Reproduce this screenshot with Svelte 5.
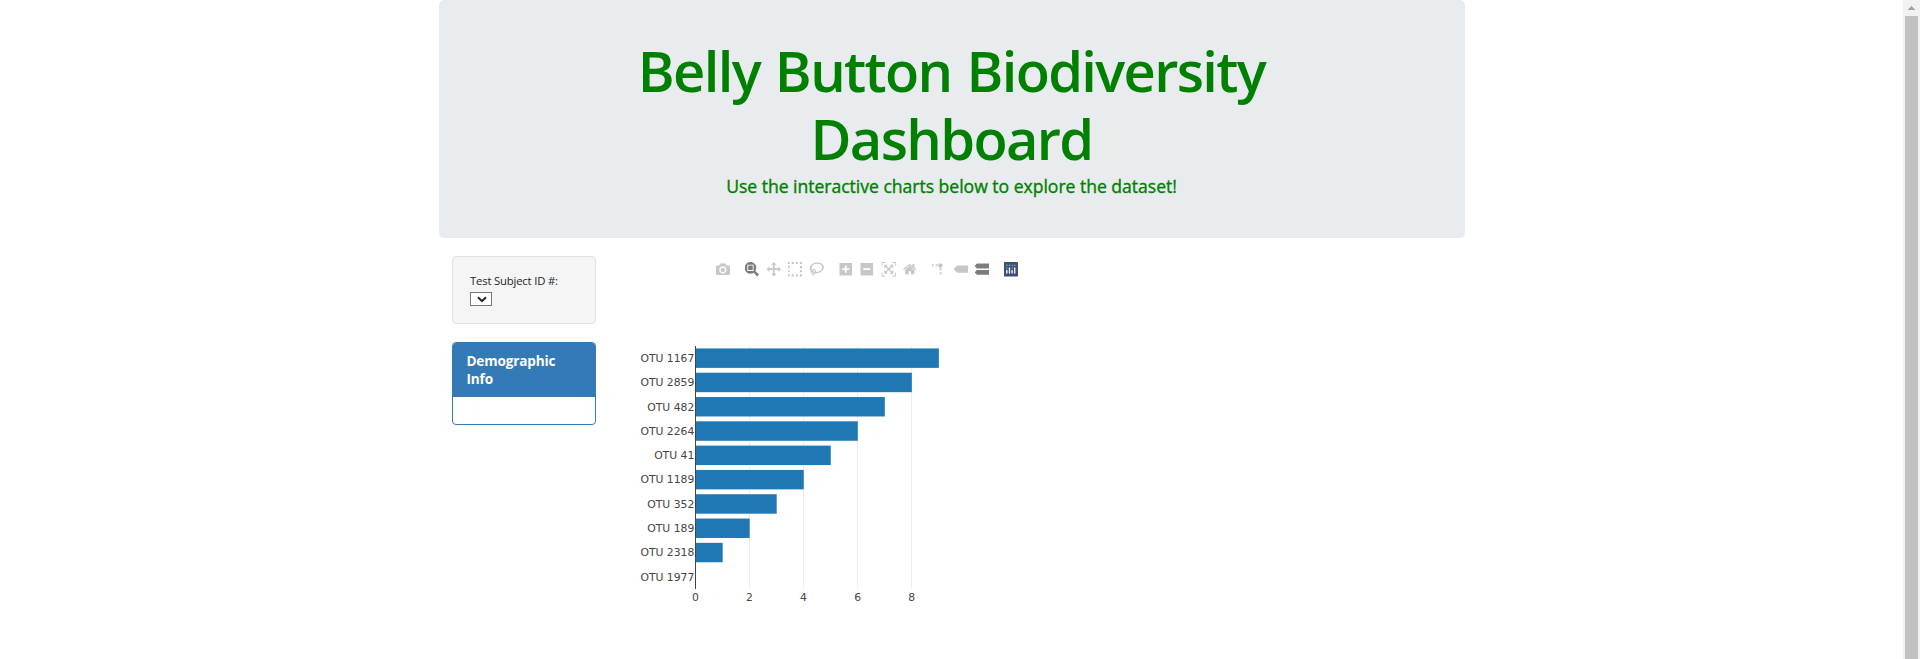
<script>
  const bars = [
    ['OTU 1167', 9],
    ['OTU 2859', 8],
    ['OTU 482', 7],
    ['OTU 2264', 6],
    ['OTU 41', 5],
    ['OTU 1189', 4],
    ['OTU 352', 3],
    ['OTU 189', 2],
    ['OTU 2318', 1],
    ['OTU 1977', 0]
  ];
  const ticks = [0, 2, 4, 6, 8];
  const x0 = 72.6;
  const unit = 27.03;
  const top = 10;
  const pitch = 24.3;
  const thick = 19.44;
  const flip = 'matrix(1 0 0 -1 0 850)';

  const groups = [
    [
      { name: 'camera', w: 1000, d: 'm500 450c-83 0-150-67-150-150 0-83 67-150 150-150 83 0 150 67 150 150 0 83-67 150-150 150z m400 150h-120c-16 0-34 13-39 29l-31 93c-6 15-23 28-40 28h-340c-16 0-34-13-39-28l-31-94c-6-15-23-28-40-28h-120c-55 0-100-45-100-100v-450c0-55 45-100 100-100h800c55 0 100 45 100 100v450c0 55-45 100-100 100z m-400-550c-138 0-250 112-250 250 0 138 112 250 250 250 138 0 250-112 250-250 0-138-112-250-250-250z m365 380c-19 0-35 16-35 35 0 19 16 35 35 35 19 0 35-16 35-35 0-19-16-35-35-35z' }
    ],
    [
      { name: 'zoom', on: true, w: 1000, d: 'm1000-25l-250 251c40 63 63 138 63 218 0 224-182 406-407 406-224 0-406-182-406-406s183-406 407-406c80 0 155 22 218 62l250-250 125 125z m-812 250l0 438 437 0 0-438-437 0z m62 375l313 0 0-312-313 0 0 312z' },
      { name: 'pan', w: 1000, d: 'm1000 350l-187 188 0-125-250 0 0 250 125 0-188 187-187-187 125 0 0-250-250 0 0 125-188-188 186-187 0 125 252 0 0-250-125 0 187-188 188 188-125 0 0 250 250 0 0-126 187 188z' },
      { name: 'select', w: 1000, d: 'm0 850l0-143 143 0 0 143-143 0z m286 0l0-143 143 0 0 143-143 0z m285 0l0-143 143 0 0 143-143 0z m286 0l0-143 143 0 0 143-143 0z m-857-286l0-143 143 0 0 143-143 0z m857 0l0-143 143 0 0 143-143 0z m-857-285l0-143 143 0 0 143-143 0z m857 0l0-143 143 0 0 143-143 0z m-857-286l0-143 143 0 0 143-143 0z m286 0l0-143 143 0 0 143-143 0z m285 0l0-143 143 0 0 143-143 0z m286 0l0-143 143 0 0 143-143 0z' },
      { name: 'lasso', w: 1031, d: 'm1018 538c-36 207-290 336-568 286-277-48-473-256-436-463 10-57 36-108 76-151-13-66 11-137 68-183 34-28 75-41 114-42l-55-70 0 0c-2-1-3-2-4-3-10-14-8-34 5-45 14-11 34-8 45 4 1 1 2 3 2 5l0 0 113 140c16 11 31 24 45 40 4 3 6 7 8 11 48-3 100 0 151 9 278 48 473 255 436 462z m-624-379c-80 14-149 48-197 96 42 42 109 47 156 9 33-26 47-66 41-105z m-187-74c-19 16-33 37-39 60 50-32 109-55 174-68-42-25-95-24-135 8z m360 75c-34-7-69-9-102-8 8 62-16 128-68 170-73 59-175 54-244-5-9 20-16 40-20 61-28 159 121 317 333 354s407-60 434-217c28-159-121-318-333-355z' }
    ],
    [
      { name: 'zoom in', w: 875, d: 'm1 787l0-875 875 0 0 875-875 0z m687-500l-187 0 0-187-125 0 0 187-188 0 0 125 188 0 0 187 125 0 0-187 187 0 0-125z' },
      { name: 'zoom out', w: 875, d: 'm0 788l0-876 875 0 0 876-875 0z m688-500l-500 0 0 125 500 0 0-125z' },
      { name: 'autoscale', w: 1000, d: 'm250 850l-187 0-63 0 0-62 0-188 63 0 0 188 187 0 0 62z m688 0l-188 0 0-62 188 0 0-188 62 0 0 188 0 62-62 0z m-875-938l0 188-63 0 0-188 0-62 63 0 187 0 0 62-187 0z m875 188l0-188-188 0 0-62 188 0 62 0 0 62 0 188-62 0z m-125 188l-1 0-93-94-156 156 156 156 92-93 2 0 0 250-250 0 0-2 93-92-156-156-156 156 94 92 0 2-250 0 0-250 0 0 93 93 157-156-157-156-93 94 0 0 0-250 250 0 0 0-94 93 156 157 156-157-93-93 0 0 250 0 0 250z' },
      { name: 'home', w: 928.6, d: 'm786 296v-267q0-15-11-26t-25-10h-214v214h-143v-214h-214q-15 0-25 10t-11 26v267q0 1 0 2t0 2l321 264 321-264q1-1 1-4z m124 39l-34-41q-5-5-12-6h-2q-7 0-12 3l-386 322-386-322q-7-4-13-4-7 2-12 7l-35 41q-4 5-3 13t6 12l401 334q18 15 42 15t43-15l136-114v109q0 8 5 13t13 5h107q8 0 13-5t5-13v-227l122-102q5-5 6-12t-4-13z' }
    ],
    [
      { name: 'spikes', w: 1000, t: 'matrix(1.5 0 0 -1.5 0 850)', d: 'M512 409c0-57-46-104-103-104-57 0-104 47-104 104 0 57 47 103 104 103 57 0 103-46 103-103z m-327-39l92 0 0 92-92 0z m-185 0l92 0 0 92-92 0z m370-186l92 0 0 93-92 0z m0-184l92 0 0 92-92 0z' },
      { name: 'closest', w: 1500, d: 'm375 725l0 0-375-375 375-374 0-1 1125 0 0 750-1125 0z' },
      { name: 'compare', on: true, w: 1125, d: 'm187 786l0 2-187-188 188-187 0 0 937 0 0 373-938 0z m0-499l0 1-187-188 188-188 0 0 937 0 0 376-938-1z' }
    ]
  ];
  const dots = [[78, 54], [102, 30], [78, 30], [54, 30], [30, 30], [30, 54]];
</script>

<div class="page">
  <main class="container">
    <header>
      <h1>Belly Button Biodiversity<br />Dashboard</h1>
      <p>Use the interactive charts below to explore the dataset!</p>
    </header>
    <div class="row">
      <aside>
        <div class="well">
          <label for="subject">Test Subject ID #:</label>
          <button id="subject" class="picker" aria-label="Subject">
            <svg viewBox="0 0 10 7"><path d="M1 1.3 5 5.1 9 1.3" /></svg>
          </button>
        </div>
        <div class="panel">
          <h3>Demographic<br />Info</h3>
          <div class="body"></div>
        </div>
      </aside>
      <section>
        <div class="modebar">
          {#each groups as group}
            <div class="group">
              {#each group as icon}
                <svg class="icon" class:on={icon.on} viewBox="0 0 {icon.w} 1000">
                  <path d={icon.d} transform={icon.t ?? flip} />
                </svg>
              {/each}
            </div>
          {/each}
          <div class="group">
            <svg class="logo" viewBox="0 0 132 132">
              <rect width="132" height="132" rx="6" fill="#3f4f75" />
              {#each dots as [cx, cy]}
                <circle {cx} {cy} r="6" fill="#80cfbe" />
              {/each}
              <path fill="#fff" d="M30,72a6,6,0,0,0-6,6v24a6,6,0,0,0,12,0V78A6,6,0,0,0,30,72Z M78,72a6,6,0,0,0-6,6v24a6,6,0,0,0,12,0V78A6,6,0,0,0,78,72Z M54,48a6,6,0,0,0-6,6v48a6,6,0,0,0,12,0V54A6,6,0,0,0,54,48Z M102,48a6,6,0,0,0-6,6v48a6,6,0,0,0,12,0V54A6,6,0,0,0,102,48Z" />
            </svg>
          </div>
        </div>
        <svg class="chart" width="400" height="290">
          {#each ticks.slice(1) as t}
            <rect x={Math.floor(x0 + t * unit)} y={top} width="1" height="243" fill="#eee" />
          {/each}
          {#each bars as [label, value], i}
            <rect x={x0} y={top + i * pitch + (pitch - thick) / 2} width={value * unit} height={thick} fill="#1f77b4" />
            <text x="71.3" y={Math.round(top + (i + 0.5) * pitch + 3.8)} text-anchor="end">{label}</text>
          {/each}
          <rect x="72" y={top} width="1" height="243" fill="#444" />
          {#each ticks as t}
            <text x={x0 - 0.2 + t * unit} y="265" text-anchor="middle">{t}</text>
          {/each}
        </svg>
      </section>
    </div>
  </main>
  <div class="scrollbar">
    <svg width="17" height="16"><path d="M5 10h7v-1h-1v-1h-1v-1h-1v-1h-1v1h-1v1h-1v1h-1z" fill="#a3a3a3" /></svg>
    <div class="thumb"></div>
  </div>
</div>

<style>
  :global(body) {
    background: #fff;
    overflow: hidden;
  }
  .page {
    display: flex;
    height: 659px;
    overflow: hidden;
    font-family: 'Open Sans', 'Noto Sans', sans-serif;
    color: #212529;
  }
  .container {
    width: 1026px;
    margin: 0 auto;
  }
  header {
    box-sizing: border-box;
    height: 238px;
    padding-top: 36px;
    border-radius: 5px;
    background: #e9ecef;
    color: green;
    text-align: center;
  }
  h1 {
    margin: 0;
    font-size: 56px;
    line-height: 68px;
    font-weight: 600;
    letter-spacing: -1.65px;
    word-spacing: 2px;
  }
  header p {
    margin: 1px 0 0;
    font-size: 17.6px;
    line-height: 26px;
    font-weight: 500;
    letter-spacing: -0.03px;
    -webkit-text-stroke: 0.35px green;
  }
  .row {
    display: flex;
    padding-top: 18px;
  }
  aside {
    width: 144px;
    padding: 0 13.5px;
  }
  .well {
    box-sizing: border-box;
    height: 68px;
    padding: 14px 17px;
    margin-bottom: 18px;
    border: 1px solid #e3e3e3;
    border-radius: 4px;
    background: #f5f5f5;
  }
  label {
    display: block;
    height: 21px;
    font-size: 11.3px;
    line-height: 20px;
    letter-spacing: -0.18px;
    white-space: nowrap;
  }
  .picker {
    display: flex;
    align-items: center;
    box-sizing: border-box;
    width: 22px;
    height: 14px;
    padding: 0 0 0 6px;
    border: 1px solid #767676;
    background: #fff;
  }
  .picker svg {
    flex: none;
    width: 10px;
    height: 7px;
    fill: none;
    stroke: #212529;
    stroke-width: 2;
  }
  .panel {
    box-sizing: border-box;
    height: 83px;
    border: 1px solid #337ab7;
    border-radius: 4px;
    overflow: hidden;
  }
  h3 {
    box-sizing: border-box;
    height: 54px;
    margin: 0;
    padding: 9px 13.4px;
    background: #337ab7;
    color: #fff;
    font-size: 13.6px;
    line-height: 18px;
    font-weight: 700;
    letter-spacing: -0.15px;
  }
  section {
    padding-left: 13.5px;
  }
  .modebar {
    display: flex;
    justify-content: flex-end;
    width: 398.6px;
    margin-top: 6.4px;
    height: 14.4px;
  }
  .group {
    display: flex;
    padding-left: 7.2px;
  }
  .icon,
  .logo {
    width: 14.4px;
    height: 14.4px;
    padding: 0 3.6px;
  }
  .icon {
    fill: rgba(68, 68, 68, 0.3);
  }
  .icon.on {
    fill: rgba(68, 68, 68, 0.7);
  }
  .chart {
    display: block;
    margin-top: 59.2px;
  }
  .chart text {
    font-family: Verdana, 'DejaVu Sans', sans-serif;
    font-size: 10.8px;
    fill: #444;
  }
  .scrollbar {
    width: 17px;
    background: #f1f1f1;
  }
  .scrollbar svg {
    display: block;
  }
  .thumb {
    width: 13px;
    height: 643px;
    margin-left: 2px;
    background: #c1c1c1;
  }
</style>
